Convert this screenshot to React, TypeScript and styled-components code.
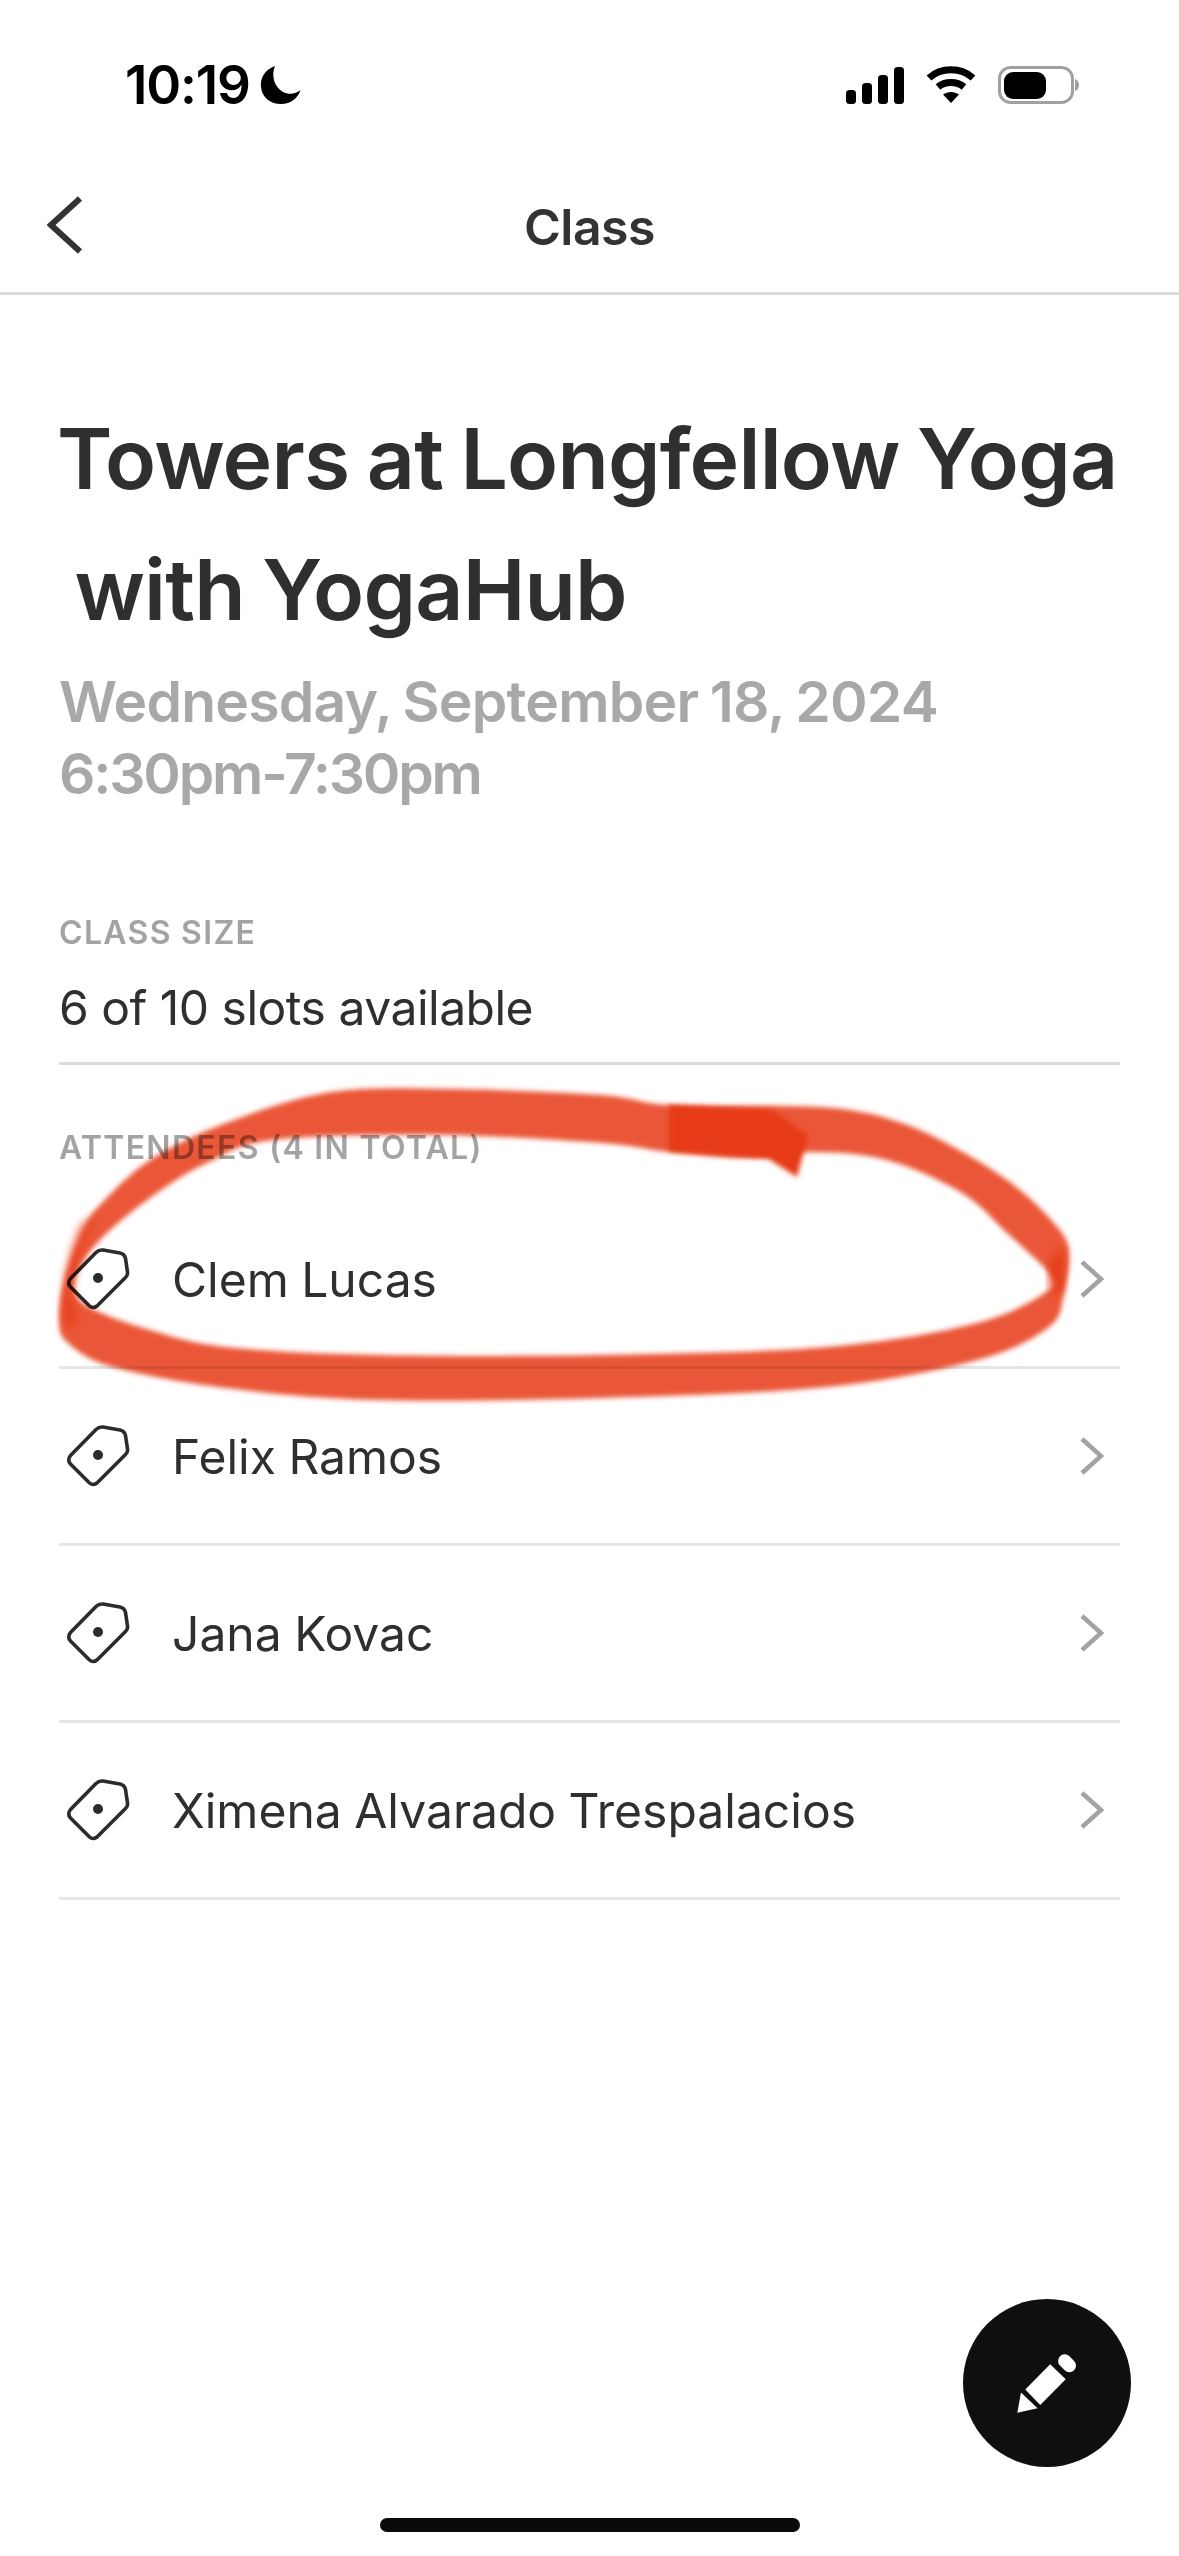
import { createGlobalStyle, styled } from "styled-components";

const GlobalStyle = createGlobalStyle`
  html, body {
    margin: 0;
    padding: 0;
    background: #fff;
  }
  body {
    font-family: Inter, "Liberation Sans", sans-serif;
  }
`;

const attendees = ["Clem Lucas", "Felix Ramos", "Jana Kovac", "Ximena Alvarado Trespalacios"];

// pen scribble contours, traced from the screenshot
const ringOuter: [number, number][] = [
  [83, 1230], [98, 1207], [150, 1160], [226, 1123], [331, 1092], [451, 1089], [601, 1095], [669, 1105],
  [789, 1106], [850, 1110], [902, 1123], [950, 1145], [1010, 1182], [1053, 1222], [1069, 1250], [1064, 1293], [1049, 1327],
  [977, 1360], [827, 1387], [601, 1398], [376, 1400], [226, 1388], [113, 1367], [68, 1343], [59, 1320], [65, 1277],
];
const ringInner: [number, number][] = [
  [80, 1267], [107, 1233], [157, 1193], [207, 1163], [273, 1140], [440, 1135], [601, 1143], [669, 1152],
  [752, 1158], [812, 1152], [887, 1160], [962, 1193], [1007, 1233], [1049, 1273], [1049, 1290], [977, 1323], [827, 1347],
  [601, 1355], [376, 1355], [226, 1347], [150, 1330], [95, 1310], [75, 1293],
];

const smoothPath = (pts: [number, number][]) => {
  const n = pts.length;
  let d = `M${pts[0][0]} ${pts[0][1]}`;
  for (let i = 0; i < n; i++) {
    const p0 = pts[(i - 1 + n) % n];
    const p1 = pts[i];
    const p2 = pts[(i + 1) % n];
    const p3 = pts[(i + 2) % n];
    const c1x = p1[0] + (p2[0] - p0[0]) / 6;
    const c1y = p1[1] + (p2[1] - p0[1]) / 6;
    const c2x = p2[0] - (p3[0] - p1[0]) / 6;
    const c2y = p2[1] - (p3[1] - p1[1]) / 6;
    d += `C${c1x} ${c1y} ${c2x} ${c2y} ${p2[0]} ${p2[1]}`;
  }
  return d + "Z";
};

const TagIcon = () => (
  <svg width="64" height="62" viewBox="0 0 64 62" fill="none">
    <path
      d="M4.500 30.500 L30 4.500 Q33 1.500 37 2 L54 5 Q58.500 6 59.500 10.500 L61.500 24 Q62 27 59.500 29.500 L31 58 Q27 61 23.500 58 L4.500 39 Q1 35 4.500 30.500Z"
      stroke="#2b2b2b"
      strokeWidth="3.6"
      strokeLinejoin="round"
    />
    <circle cx="32" cy="30" r="5" fill="#2b2b2b" />
  </svg>
);

const Chevron = () => (
  <svg width="26" height="40" viewBox="0 0 26 40" fill="none">
    <path d="M3 3 L22 20 L3 37" stroke="#a3a3a3" strokeWidth="4.500" />
  </svg>
);

const App = () => {
  return (
    <Page>
      <GlobalStyle />
      <StatusBar>
        <TimeGroup>
          <Time>10:19</Time>
          <svg width="42" height="40" viewBox="0 0 42 40">
            <path d="M15 1 C4 5 0 14 1 22 C2 33 11 39 21 39 C31 39 38 33 40.500 25 C36 29 29 30 23 27 C14 22 11 10 15 1Z" fill="#000" />
          </svg>
        </TimeGroup>
        <StatusIcons>
          <svg width="58" height="37" viewBox="0 0 58 37" fill="#000">
            <rect x="0" y="23" width="10" height="14" rx="3.500" />
            <rect x="16" y="16" width="10" height="21" rx="3.500" />
            <rect x="32" y="8" width="10" height="29" rx="3.500" />
            <rect x="48" y="0" width="10" height="37" rx="3.500" />
          </svg>
          <svg width="50" height="38" viewBox="0 0 50 38" fill="none" stroke="#000" strokeWidth="7">
            <path d="M3 12 C15 1 35 1 47 12" />
            <path d="M12 21 C19 15 31 15 38 21" />
            <path d="M25 37 L17 28.500 C22 25 28 25 33 28.500Z" fill="#000" stroke="none" />
          </svg>
          <svg width="82" height="38" viewBox="0 0 82 38" fill="none">
            <rect x="1.500" y="1.500" width="73" height="35" rx="11" stroke="#a0a0a0" strokeWidth="3" />
            <rect x="6" y="6" width="42" height="27" rx="9" fill="#000" />
            <path d="M77 13 C80 14 81 16.500 81 19 C81 21.500 80 24 77 25Z" fill="#a0a0a0" />
          </svg>
        </StatusIcons>
      </StatusBar>

      <NavBar>
        <BackButton>
          <svg width="36" height="58" viewBox="0 0 36 58" fill="none">
            <path d="M33 2.500 L4 29 L33 55.500" stroke="#333" strokeWidth="6" />
          </svg>
        </BackButton>
        <NavTitle>Class</NavTitle>
      </NavBar>

      <Content>
        <Title>{"Towers at Longfellow Yoga\n with YogaHub"}</Title>
        <Subtitle>Wednesday, September 18, 2024</Subtitle>
        <Subtitle $tight>6:30pm-7:30pm</Subtitle>

        <SectionLabel $gap={103}>CLASS SIZE</SectionLabel>
        <SizeValue>6 of 10 slots available</SizeValue>

        <SectionLabel $gap={63}>ATTENDEES (4 IN TOTAL)</SectionLabel>
        <AttendeeList>
          {attendees.map((name) => (
            <AttendeeRow key={name}>
              <TagIcon />
              <AttendeeName>{name}</AttendeeName>
              <Chevron />
            </AttendeeRow>
          ))}
        </AttendeeList>
      </Content>

      <HomeBar>
        <HomeIndicator />
      </HomeBar>

      <EditFab>
        <svg width="63" height="63" viewBox="285 270 190 190" fill="#fff">
          <path d="M289 453 L300 392 L350 440Z" />
          <path d="M313 383 L388 307 L435 352 L358 430Z" />
          <rect x="409" y="284" width="60" height="40" rx="20" transform="rotate(45 439 304)" />
        </svg>
      </EditFab>

      <Scribble viewBox="0 0 1179 2556">
        <defs>
          <filter id="pen" x="-5%" y="-5%" width="110%" height="110%">
            <feGaussianBlur stdDeviation="2.4" />
          </filter>
          <filter id="pen-soft" x="-30%" y="-30%" width="160%" height="160%">
            <feGaussianBlur stdDeviation="5" />
          </filter>
        </defs>
        <path filter="url(#pen)" d={smoothPath(ringOuter) + smoothPath(ringInner)} fillRule="evenodd" fill="#ea5638" />
        <path filter="url(#pen)" d="M669 1105 L772 1110 L808 1136 L797 1177 L767 1158 L669 1151Z" fill="#e63a12" />
        <path filter="url(#pen-soft)" d="M92 1218 C80 1245 72 1270 70 1295 L76 1325 L66 1325 C62 1300 66 1260 82 1225Z" fill="#e63a12" />
        <path filter="url(#pen-soft)" d="M1064 1245 L1062 1295 L1050 1290 L1050 1265Z" fill="#e63a12" />
      </Scribble>
    </Page>
  );
};

const Page = styled.div`
  position: relative;
  width: 1179px;
  height: 2556px;
  display: flex;
  flex-direction: column;
  overflow: hidden;
  background: #fff;
`;

const StatusBar = styled.div`
  height: 136px;
  box-sizing: border-box;
  padding: 34px 99px 0 125px;
  display: flex;
  align-items: center;
  justify-content: space-between;
`;

const TimeGroup = styled.div`
  display: flex;
  align-items: center;
  gap: 10px;
`;

const Time = styled.span`
  font-size: 53px;
  font-weight: 600;
  letter-spacing: -1.2px;
  color: #000;
`;

const StatusIcons = styled.div`
  display: flex;
  align-items: center;
  gap: 22px;
`;

const NavBar = styled.div`
  position: relative;
  height: 159px;
  display: flex;
  align-items: center;
  justify-content: center;
  border-bottom: 3px solid #dcdcdc;
  padding-top: 26px;
  box-sizing: border-box;
`;

const BackButton = styled.div`
  position: absolute;
  left: 47px;
  top: 60px;
  line-height: 0;
`;

const NavTitle = styled.div`
  font-size: 50px;
  font-weight: 600;
  letter-spacing: -0.5px;
  color: #333;
`;

const Content = styled.div`
  flex: 1;
  padding: 98px 59px 0;
  display: flex;
  flex-direction: column;
`;

const Title = styled.h1`
  margin: 0 0 11px -2px;
  font-size: 84px;
  line-height: 131px;
  font-weight: 580;
  letter-spacing: -0.8px;
  word-spacing: -3px;
  white-space: pre-wrap;
  color: #2f2f2f;
`;

const Subtitle = styled.div<{ $tight?: boolean }>`
  font-size: 57px;
  line-height: 72px;
  font-weight: 600;
  letter-spacing: ${(p) => (p.$tight ? "-2.2px" : "-0.8px")};
  word-spacing: -2px;
  color: #a8a8a8;
`;

const SectionLabel = styled.div<{ $gap: number }>`
  margin-top: ${(p) => p.$gap}px;
  font-size: 32px;
  line-height: 40px;
  font-weight: 600;
  letter-spacing: 1.3px;
  color: #a3a3a3;
`;

const SizeValue = styled.div`
  margin-top: 25px;
  padding-bottom: 24px;
  border-bottom: 3px solid #dcdcdc;
  font-size: 48px;
  line-height: 60px;
  letter-spacing: -0.5px;
  color: #2f2f2f;
`;

const AttendeeList = styled.div`
  margin-top: 24px;
  display: flex;
  flex-direction: column;
`;

const AttendeeRow = styled.div`
  height: 177px;
  box-sizing: border-box;
  padding: 0 15px 0 7px;
  display: flex;
  align-items: center;
  gap: 42px;
  border-bottom: 3px solid #e6e6e6;
`;

const AttendeeName = styled.div`
  flex: 1;
  font-size: 48px;
  word-spacing: -1px;
  color: #2f2f2f;
`;

const HomeBar = styled.div`
  height: 38px;
  display: flex;
  justify-content: center;
`;

const HomeIndicator = styled.div`
  width: 420px;
  height: 14px;
  border-radius: 7px;
  background: #0a0a0a;
`;

const EditFab = styled.div`
  position: absolute;
  left: 963px;
  top: 2299px;
  width: 168px;
  height: 168px;
  border-radius: 50%;
  background: #0f0f0f;
  display: flex;
  align-items: center;
  justify-content: center;
`;

const Scribble = styled.svg`
  position: absolute;
  inset: 0;
  width: 1179px;
  height: 2556px;
  mix-blend-mode: multiply;
  pointer-events: none;
`;

export default App;
